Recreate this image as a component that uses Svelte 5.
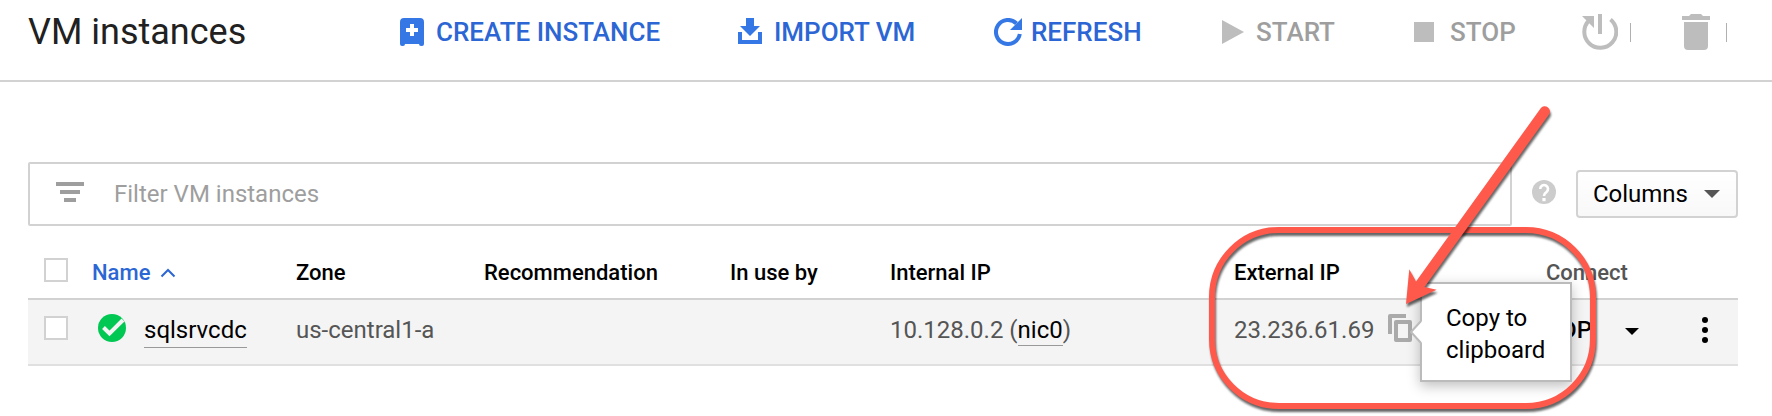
<script>
  let allChecked = $state(false);
  let rowChecked = $state(false);
  let filter = $state('');
</script>

<div class="page">
  <header class="bar">
    <h1>VM instances</h1>
    <nav class="tools" aria-label="Instance actions">
      <button class="create">
        <svg width="24" height="28" viewBox="0 0 24 28"><path fill="#3578e5" fill-rule="evenodd" d="M4 0h16a4 4 0 0 1 4 4v22q0 2-2 2h-1q-2 0-2-2H5q0 2-2 2H2q-2 0-2-2V4a4 4 0 0 1 4-4zM10 6v4H6v4h4v4h4v-4h4v-4h-4V6z" /></svg>
        CREATE INSTANCE
      </button>
      <button class="import">
        <svg width="24" height="28" viewBox="0 0 24 28"><path fill="#3578e5" d="M8 0h8v8h6L12 18 2 8h6zM0 14h4v8h16v-8h4v12H0z" /></svg>
        IMPORT VM
      </button>
      <button class="refresh">
        <svg width="28" height="28" viewBox="0 0 28 28"><path fill="none" stroke="#3578e5" stroke-width="4" d="M22.5 5.500A12 12 0 1 0 25.800 16" /><path fill="#3578e5" d="M28 0v12H16z" /></svg>
        REFRESH
      </button>
      <button class="start" disabled>
        <svg width="22" height="24" viewBox="0 0 22 24"><path fill="#bdbdbd" d="M0 0l22 12L0 24z" /></svg>
        START
      </button>
      <button class="stop" disabled>
        <svg width="20" height="20" viewBox="0 0 20 20"><path fill="#bdbdbd" d="M0 0h20v20H0z" /></svg>
        STOP
      </button>
      <button class="reset" disabled aria-label="Reset">
        <svg width="36" height="36" viewBox="0 0 36 36"><path fill="none" stroke="#bdbdbd" stroke-width="4" d="M28.500 5.500A16 16 0 1 1 7 6.500" /><path fill="#bdbdbd" d="M16 0h4v20h-4zM0 2h12v12z" /></svg>
        <span class="tick"></span>
      </button>
      <button class="delete" disabled aria-label="Delete">
        <svg width="28" height="36" viewBox="0 0 28 36"><path fill="#bdbdbd" d="M0 2h7l2-2h10l2 2h7v4H0zM2 8h24v24a4 4 0 0 1-4 4H6a4 4 0 0 1-4-4z" /></svg>
        <span class="tick"></span>
      </button>
    </nav>
  </header>

  <main>
    <div class="filters">
      <label class="search">
        <svg width="28" height="20" viewBox="0 0 28 20"><path fill="#9e9e9e" d="M0 0h28v4H0zM4 8h20v4H4zM8 16h12v4H8z" /></svg>
        <input type="text" placeholder="Filter VM instances" aria-label="Filter VM instances" bind:value={filter} />
      </label>
      <button class="help" aria-label="Help">
        <svg width="24" height="24" viewBox="0 0 24 24"><circle cx="12" cy="12" r="12" fill="#ccc" /><path fill="none" stroke="#fff" stroke-width="2.600" d="M8.200 9a3.900 3.900 0 1 1 6.200 3.100Q12 13.600 12 16" /><path fill="#fff" d="M10.400 18h3.200v3.200h-3.200z" /></svg>
      </button>
      <button class="columns">
        Columns
        <svg width="16" height="8" viewBox="0 0 16 8"><path fill="#555" d="M0 0h16L8 8z" /></svg>
      </button>
    </div>

    <table>
      <colgroup>
        <col class="c-check" /><col class="c-name" /><col class="c-zone" /><col class="c-rec" /><col class="c-use" /><col class="c-int" /><col class="c-ext" /><col class="c-con" /><col class="c-more" />
      </colgroup>
      <thead>
        <tr>
          <th class="check"><input type="checkbox" aria-label="Select all" bind:checked={allChecked} /></th>
          <th class="sorted">
            Name
            <svg width="16" height="10" viewBox="0 0 16 10"><path fill="none" stroke="#2c66d4" stroke-width="2" d="M1.500 8.500 8 2l6.500 6.500" /></svg>
          </th>
          <th>Zone</th>
          <th>Recommendation</th>
          <th>In use by</th>
          <th>Internal IP</th>
          <th>External IP</th>
          <th class="muted">Connect</th>
          <th></th>
        </tr>
      </thead>
      <tbody>
        <tr>
          <td class="check"><input type="checkbox" aria-label="Select sqlsrvcdc" bind:checked={rowChecked} /></td>
          <td>
            <div class="name">
              <svg class="status" width="28" height="28" viewBox="0 0 28 28"><circle cx="14" cy="14" r="14" fill="#00c853" /><path fill="none" stroke="#f4f4f4" stroke-width="4" d="M5.500 13.500l6 6L25 6" /></svg>
              <a href="#instance">sqlsrvcdc</a>
            </div>
          </td>
          <td>us-central1-a</td>
          <td></td>
          <td></td>
          <td>10.128.0.2 (<a href="#nic0">nic0</a>)</td>
          <td>
            <div class="ext">
              23.236.61.69
              <button class="copy" aria-label="Copy to clipboard">
                <svg width="24" height="28" viewBox="0 0 24 28"><path fill="none" stroke="#aaa" stroke-width="4" stroke-linejoin="round" d="M2 20V2h16M8 8h14v18H8z" /></svg>
              </button>
              <div class="tip" role="tooltip">
                <svg class="tail" width="12" height="22" viewBox="0 0 12 22"><path fill="#fff" d="M12 0 1 11l11 11z" /><path fill="none" stroke="#bbb" stroke-width="2" d="M11 0 1 11l10 11" /></svg>
                Copy to clipboard
              </div>
            </div>
          </td>
          <td>
            <div class="connect">
              <button class="rdp">RDP</button>
              <button class="drop" aria-label="Connection options"><svg width="14" height="8" viewBox="0 0 14 8"><path d="M0 0h14L7 7z" /></svg></button>
            </div>
          </td>
          <td class="more"><button aria-label="More actions"><svg width="6" height="26" viewBox="0 0 6 26"><circle cx="3" cy="3" r="3" /><circle cx="3" cy="13" r="3" /><circle cx="3" cy="23" r="3" /></svg></button></td>
        </tr>
      </tbody>
    </table>
  </main>

  <svg class="mark" width="400" height="320" viewBox="1200 94 400 320" aria-hidden="true">
    <rect x="1212" y="230" width="381" height="176" rx="67" fill="none" stroke="#ff594c" stroke-width="6" />
    <path fill="#ff594c" d="M1406 304 1409.300 269.300 1416 281.500 1540.500 108.500A5.200 5.200 0 0 1 1549 114.500L1424.500 287 1436.700 289.700z" />
  </svg>
</div>

<style>
  :global(body) { margin: 0; background: #fff; }
  .page { position: relative; min-height: 100vh; box-sizing: border-box; overflow: hidden; font: 24px/32px Roboto, sans-serif; color: #555; }
  svg { display: block; flex: none; }
  button { display: flex; align-items: center; border: 0; padding: 0; background: none; font: inherit; color: inherit; }
  .bar { display: flex; align-items: center; height: 64px; padding: 0 0 16px 28px; border-bottom: 2px solid #d2d2d2; }
  h1 { margin: 0; width: 372px; font-size: 36px; line-height: 40px; font-weight: 400; color: #212121; }
  .tools { display: flex; align-items: center; font-size: 26px; font-weight: 500; color: #2c66d4; white-space: nowrap; }
  .tools button { gap: 12px; }
  .tools button:disabled { color: #9e9e9e; }
  .create { width: 338px; }
  .import { width: 256px; }
  .tools .refresh { width: 228px; gap: 9px; }
  .start { width: 192px; }
  .tools .stop { width: 168px; gap: 16px; }
  .reset { width: 100px; }
  .tools .delete { gap: 16px; }
  .tick { width: 1px; height: 19px; background: #b0b0b0; }
  main { padding: 80px 34px 0 28px; }
  .filters { display: flex; align-items: center; }
  .search { flex: 1; display: flex; align-items: center; gap: 30px; height: 60px; padding-left: 26px; border: 2px solid #d2d2d2; border-radius: 2px; }
  .search input { flex: 1; min-width: 0; border: 0; padding: 0; outline: 0; background: none; font: inherit; color: #212121; }
  .search input::placeholder { color: #9e9e9e; opacity: 1; }
  .help { margin: 0 20px; }
  .search svg { margin-bottom: 4px; }
  .help svg { margin-bottom: 4px; }
  .columns { height: 48px; box-sizing: border-box; padding: 0 16px 0 15px; gap: 16px; border: 2px solid #d2d2d2; border-radius: 4px; background: linear-gradient(#fff, #f8f8f8); color: #000; }
  table { width: 100%; table-layout: fixed; border-collapse: separate; border-spacing: 0; white-space: nowrap; }
  th, td { padding: 0; text-align: left; box-sizing: border-box; }
  th { height: 74px; padding-top: 22px; border-bottom: 2px solid #d2d2d2; font-size: 22px; font-weight: 500; color: #000; }
  td { height: 66px; padding-bottom: 4px; border-bottom: 2px solid #e0e0e0; background: #f4f4f4; }
  th.muted { color: #555; }
  .sorted { color: #2c66d4; }
  .sorted svg { display: inline-block; margin-left: 4px; vertical-align: 2px; }
  .c-check { width: 64px; }
  .c-name { width: 204px; }
  .c-zone { width: 188px; }
  .c-rec { width: 246px; }
  .c-use { width: 160px; }
  .c-int { width: 344px; }
  .c-ext { width: 312px; }
  .c-more { width: 36px; }
  .check { padding-left: 16px; }
  th.check { padding-top: 16px; }
  td.check { padding-bottom: 8px; }
  .check input { appearance: none; display: block; width: 24px; height: 24px; margin: 0; border: 2px solid #d2d2d2; background: #fff; box-sizing: border-box; }
  .name { display: flex; align-items: center; gap: 18px; padding-left: 6px; }
  .status, .copy { margin-bottom: 4px; }
  a { color: #000; text-decoration: none; padding-bottom: 1px; box-shadow: 0 1px #999; }
  .ext { position: relative; display: flex; align-items: center; gap: 14px; }
  .tip { position: absolute; left: 186px; top: -32px; width: 152px; height: 100px; box-sizing: border-box; padding: 18px 24px 14px; border: 2px solid #bbb; background: #fff; color: #000; white-space: normal; box-shadow: 0 4px 12px rgba(0, 0, 0, .25); }
  .tail { position: absolute; left: -12px; top: 37px; }
  .connect { display: flex; align-items: center; gap: 33px; color: #000; font-weight: 500; }
  .drop { padding-top: 4px; }
  .mark { position: absolute; top: 94px; right: 172px; pointer-events: none; }
  .mark rect, .mark path { filter: drop-shadow(1px 3px 1px rgba(0, 0, 0, .6)); }
</style>
